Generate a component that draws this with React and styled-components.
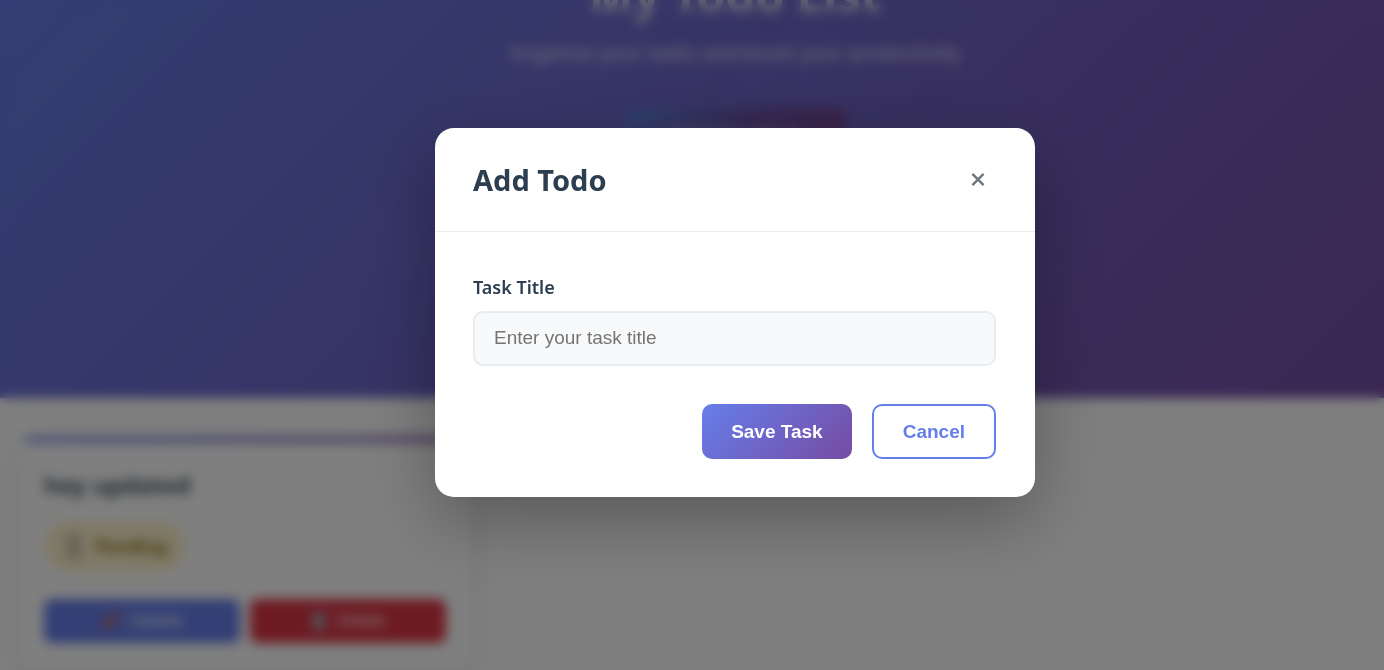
import React from "react";
import styled, { createGlobalStyle } from "styled-components";

const GlobalStyle = createGlobalStyle`
  *, *::before, *::after { box-sizing: border-box; }
  html, body { margin: 0; overflow: hidden; background: #fff; }
  body { font-family: "Segoe UI", "Noto Sans", sans-serif; color: #2c3e50; }
  button, input { font-family: Arial, "Liberation Sans", sans-serif; }
`;

const bleed = "86px";

const Page = styled.div`
  height: 100vh;
  overflow: hidden;
`;

const Hero = styled.header`
  width: calc(100% + ${bleed});
  height: 498px;
  margin-top: -100px;
  padding-top: 58px;
  display: flex;
  flex-direction: column;
  align-items: center;
  background: linear-gradient(135deg, #667eea 0%, #764ba2 100%);
  color: #fff;
`;

const HeroTitle = styled.h1`
  margin: 0;
  font-size: 47px;
  line-height: 72px;
  font-weight: 700;
  opacity: 0.7;
`;

const HeroText = styled.p`
  margin: 8px 0 40px;
  font-size: 20px;
  line-height: 30px;
  opacity: 0.8;
`;

const AddButton = styled.button`
  width: 221px;
  height: 55px;
  border: 0;
  border-radius: 10px;
  background: linear-gradient(135deg, #5f82de 0%, #684fa4 50%, #7c4488 100%);
  color: #ffffffb0;
  font-size: 19px;
  font-weight: 700;
`;

const List = styled.main`
  padding: 39px 19px;
`;

const Card = styled.article`
  width: 452px;
  padding: 28px 25px 25px;
  border-radius: 14px;
  overflow: hidden;
  position: relative;
  background: #fff;
  box-shadow: 0 10px 30px rgba(0, 0, 0, 0.1);

  &::before {
    content: "";
    position: absolute;
    inset: 0 0 auto;
    height: 5px;
    background: linear-gradient(90deg, #667eea, #764ba2);
  }
`;

const CardTitle = styled.h3`
  margin: 2px 0 18px;
  font-size: 24px;
  line-height: 36px;
  font-weight: 600;
`;

const Status = styled.span`
  display: inline-flex;
  align-items: center;
  gap: 12px;
  height: 50px;
  padding: 0 19px;
  border-radius: 25px;
  background: #fff3cd;
  color: #856404;
  font-size: 18px;
  font-weight: 600;
`;

const CardActions = styled.div`
  display: grid;
  grid-template-columns: 1fr 1fr;
  gap: 10px;
  margin-top: 28px;
`;

const CardButton = styled.button`
  display: flex;
  align-items: center;
  justify-content: center;
  gap: 8px;
  height: 44px;
  border: 0;
  border-radius: 8px;
  background: ${(p) => p.$color};
  color: #fff;
  font-size: 17px;
`;

const Overlay = styled.div`
  position: fixed;
  inset: 0 -${bleed} 0 0;
  display: flex;
  align-items: center;
  justify-content: center;
  padding-bottom: 45px;
  background: rgba(0, 0, 0, 0.5);
  backdrop-filter: blur(6px);
`;

const Modal = styled.section`
  width: 90%;
  max-width: 600px;
  border-radius: 19px;
  background: #fff;
  box-shadow: 0 24px 72px rgba(0, 0, 0, 0.3);
`;

const ModalHeader = styled.div`
  display: flex;
  align-items: center;
  justify-content: space-between;
  padding: 30px 39px 30px 38px;
  border-bottom: 1px solid #e9ecef;
`;

const ModalTitle = styled.h2`
  margin: 0;
  font-size: 29px;
  line-height: 43px;
  font-weight: 700;
`;

const CloseButton = styled.button`
  display: grid;
  place-items: center;
  width: 36px;
  height: 36px;
  padding: 0;
  border: 0;
  border-radius: 50%;
  background: none;
  color: #6c757d;
`;

const Form = styled.form`
  padding: 40px 39px 38px 38px;
`;

const Label = styled.label`
  display: block;
  margin-bottom: 8px;
  font-size: 18px;
  line-height: 31px;
  font-weight: 600;
`;

const Input = styled.input`
  display: block;
  width: 100%;
  height: 55px;
  padding: 0 19px 2px;
  border: 2px solid #e9ecef;
  border-radius: 10px;
  background: #f8f9fa;
  font-size: 19px;

  &::placeholder { color: #757575; }
`;

const Actions = styled.div`
  display: flex;
  justify-content: flex-end;
  gap: 20px;
  margin-top: 38px;
`;

const Button = styled.button`
  height: 55px;
  padding: 0 29px;
  border: ${(p) => (p.$primary ? "0" : "2px solid #667eea")};
  border-radius: 10px;
  background: ${(p) => (p.$primary ? "linear-gradient(135deg, #667eea 0%, #764ba2 100%)" : "#fff")};
  color: ${(p) => (p.$primary ? "#fff" : "#667eea")};
  font-size: 19px;
  font-weight: 700;
`;

const Hourglass = () => (
  <svg width="20" height="24" viewBox="0 0 20 24" aria-hidden="true">
    <path d="M5 2h12v3l-4 7 4 7v3H5v-3l4-7-4-7z" fill="#e2dfc4" stroke="#8f937e" strokeWidth="2" />
  </svg>
);

const Pencil = () => (
  <svg width="20" height="20" viewBox="0 0 20 20" aria-hidden="true">
    <path d="M1 19l2-6L14 2l4 4L7 17z" fill="#e0653c" />
    <path d="M14 2l4 4 1-2-3-3z" fill="#e88" />
  </svg>
);

const Bin = () => (
  <svg width="18" height="20" viewBox="0 0 18 20" aria-hidden="true">
    <path d="M1 2h16v3H1zM3 6h12l-1 13H4z" fill="#9fb4c4" />
  </svg>
);

const Cross = () => (
  <svg width="14" height="14" viewBox="0 0 14 14" aria-hidden="true">
    <path d="M1.4 0.9l11.2 11.2M12.6 0.9l-11.2 11.2" stroke="currentColor" strokeWidth="2.4" />
  </svg>
);

export default function App() {
  return (
    <>
      <GlobalStyle />
      <Page>
        <Hero>
          <HeroTitle>My Todo List</HeroTitle>
          <HeroText>Organize your tasks and boost your productivity</HeroText>
          <AddButton type="button">Add New Task</AddButton>
        </Hero>
        <List>
          <Card>
            <CardTitle>hey updated</CardTitle>
            <Status><Hourglass />Pending</Status>
            <CardActions>
              <CardButton type="button" $color="#667eea"><Pencil />Update</CardButton>
              <CardButton type="button" $color="#dc3545"><Bin />Delete</CardButton>
            </CardActions>
          </Card>
        </List>
      </Page>
      <Overlay>
        <Modal role="dialog" aria-modal="true" aria-labelledby="modal-title">
          <ModalHeader>
            <ModalTitle id="modal-title">Add Todo</ModalTitle>
            <CloseButton type="button" aria-label="Close"><Cross /></CloseButton>
          </ModalHeader>
          <Form onSubmit={(e) => e.preventDefault()}>
            <Label htmlFor="task-title">Task Title</Label>
            <Input id="task-title" type="text" placeholder="Enter your task title" />
            <Actions>
              <Button type="submit" $primary>Save Task</Button>
              <Button type="button">Cancel</Button>
            </Actions>
          </Form>
        </Modal>
      </Overlay>
    </>
  );
}
